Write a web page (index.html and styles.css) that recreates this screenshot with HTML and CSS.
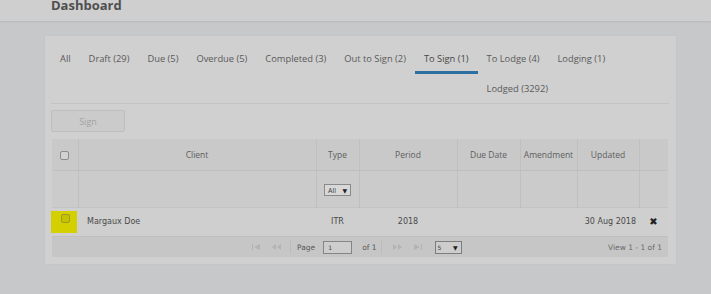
FILE: index.html
```html
<!DOCTYPE html>
<html>
<head>
<meta charset="utf-8">
<link rel="stylesheet" href="styles.css">
</head>
<body>
<header class="topbar"><h1 class="title">Dashboard</h1></header>
<main class="main">
  <section class="panel">
    <nav class="tabs">
      <a class="tab">All</a>
      <a class="tab">Draft (29)</a>
      <a class="tab">Due (5)</a>
      <a class="tab">Overdue (5)</a>
      <a class="tab">Completed (3)</a>
      <a class="tab">Out to Sign (2)</a>
      <a class="tab active">To Sign (1)</a>
      <a class="tab">To Lodge (4)</a>
      <a class="tab">Lodging (1)</a>
      <a class="tab">Lodged (3292)</a>
    </nav>
    <div class="toolbar"><button class="btn">Sign</button></div>
    <div class="grid">
      <table class="tbl">
        <colgroup>
          <col class="c-chk"><col class="c-client"><col class="c-type"><col class="c-period"><col class="c-due"><col class="c-amend"><col class="c-upd"><col class="c-act">
        </colgroup>
        <thead>
          <tr class="hrow">
            <th><span class="cb"></span></th>
            <th>Client</th>
            <th>Type</th>
            <th>Period</th>
            <th>Due Date</th>
            <th>Amendment</th>
            <th>Updated</th>
            <th></th>
          </tr>
          <tr class="frow">
            <th></th><th></th>
            <th><span class="sel">All<span class="arrow">▼</span></span></th>
            <th></th><th></th><th></th><th></th><th></th>
          </tr>
        </thead>
        <tbody>
          <tr class="drow">
            <td class="chkcell"><span class="hl"><span class="cb cb-y"></span></span></td>
            <td class="left">Margaux Doe</td>
            <td>ITR</td>
            <td>2018</td>
            <td></td>
            <td></td>
            <td class="right">30 Aug 2018</td>
            <td class="x">✖</td>
          </tr>
        </tbody>
      </table>
      <div class="pager">
        <div class="pg-center">
          <span class="pa"><svg width="8" height="6" viewBox="0 0 8 6"><rect x="0" y="0" width="1" height="6"/><path d="M8 0 L2 3 L8 6 Z"/></svg></span>
          <span class="pa"><svg width="9" height="6" viewBox="0 0 9 6"><path d="M4 0 L0 3 L4 6 Z M9 0 L5 3 L9 6 Z"/></svg></span>
          <span class="sep"></span>
          <span class="pt">Page</span><span class="pin">1</span><span class="pt">of 1</span>
          <span class="sep"></span>
          <span class="pa"><svg width="9" height="6" viewBox="0 0 9 6"><path d="M0 0 L4 3 L0 6 Z M5 0 L9 3 L5 6 Z"/></svg></span>
          <span class="pa"><svg width="8" height="6" viewBox="0 0 8 6"><path d="M0 0 L6 3 L0 6 Z"/><rect x="7" y="0" width="1" height="6"/></svg></span>
          <span class="psel">5<span class="arrow">▼</span></span>
        </div>
        <div class="pg-right">View 1 - 1 of 1</div>
      </div>
    </div>
  </section>
</main>
</body>
</html>
```
FILE: styles.css
```css
html, body { margin: 0; padding: 0; }
body {
  background: #c7c8ca;
  font-family: "Open Sans", "DejaVu Sans", sans-serif;
  width: 711px;
  height: 294px;
  overflow: hidden;
}
.topbar {
  height: 21px;
  background: #cfcfcf;
  box-shadow: 0 1px 2px rgba(0,0,0,0.08);
  overflow: hidden;
  padding-left: 51px;
}
.title {
  margin: -4px 0 0 0;
  font-size: 13px;
  font-weight: 700;
  color: #4f4f4f;
  line-height: 18px;
}
.main { padding: 15px 0 0 45px; }
.panel {
  width: 618px;
  background: #d0d0d0;
  padding: 8px 7px 7px 6px;
  box-shadow: 0 0 1px rgba(0,0,0,0.08);
}
.tabs {
  height: 59px;
  overflow: hidden;
  border-bottom: 1px solid #c3c3c3;
}
.tab {
  float: left;
  display: block;
  padding: 0 9px;
  height: 30px;
  line-height: 30px;
  font-size: 9.33px;
  color: #5a5a5a;
}
.tab.active {
  color: #474747;
  height: 27px;
  border-bottom: 3px solid #2c6e9f;
  margin-bottom: 2px;
}
.toolbar { padding: 6px 0 7px 0; }
.btn {
  display: block;
  width: 74px;
  height: 22px;
  margin: 0;
  padding: 0;
  background: #cbcbcb;
  border: 1px solid #bebebe;
  border-radius: 2px;
  color: #a3a3a3;
  font-family: "Open Sans", sans-serif;
  font-size: 9px;
}
.grid { margin-left: 1px; width: 616px; }
.tbl {
  width: 616px;
  border-collapse: collapse;
  table-layout: fixed;
}
.c-chk { width: 26px; }
.c-client { width: 238px; }
.c-type { width: 43px; }
.c-period { width: 98px; }
.c-due { width: 63px; }
.c-amend { width: 57px; }
.c-upd { width: 62px; }
.c-act { width: 29px; }
.tbl th {
  border: 1px solid #bfbfbf;
  border-top: none;
  font-weight: 400;
  font-size: 8.5px;
  color: #5e5e5e;
  padding: 0;
  text-align: center;
}
.tbl th:first-child { border-left: none; }
.tbl th:last-child { border-right: none; }
.hrow { height: 31px; background: #c9c9c9; }
.frow { height: 37px; background: #cbcbcb; }
.frow th { border-bottom: none; }
.cb {
  display: inline-block;
  width: 7px;
  height: 7px;
  border: 1px solid #8d8d8d;
  border-radius: 2px;
  background: #d2d2d2;
  vertical-align: middle;
}
.sel {
  display: inline-block;
  width: 27px;
  height: 12px;
  line-height: 12px;
  border: 1px solid #8a8a8a;
  background: #d8d8d8;
  font-size: 7px;
  color: #3c3c3c;
  text-align: left;
  padding-left: 3px;
  box-sizing: border-box;
  margin-top: 3px;
}
.arrow { float: right; font-size: 6px; margin-right: 3px; color: #222; }
.drow { height: 29px; background: #cfcfcf; }
.drow td {
  font-family: "DejaVu Sans", Verdana, sans-serif;
  font-size: 8px;
  color: #4a4a4a;
  text-align: center;
  padding: 0;
  border-top: 1px solid #c4c4c4;
}
.drow td.left { text-align: left; padding-left: 9px; }
.drow td.right { text-align: right; padding-right: 3px; }
.drow td.x { font-size: 10px; color: #222; }
.hl {
  display: block;
  width: 26px;
  height: 22px;
  margin-left: -1px;
  background: #d3cf00;
  line-height: 20px;
  text-align: center;
}
.cb-y { background: #c6c200; border-color: #9c9a2c; margin-left: 3px; margin-top: -4px; }
.pager {
  height: 20px;
  background: #c6c6c6;
  border-top: 1px solid #c0c0c0;
  display: flex;
  align-items: center;
  font-family: "DejaVu Sans", Verdana, sans-serif;
  font-size: 7.5px;
  color: #595959;
}
.pg-center {
  display: flex;
  align-items: center;
  margin-left: 194px;
}
.pa { width: 20px; display: flex; justify-content: center; }
.pa svg { fill: #b3b3b3; display: block; }
.sep { width: 1px; height: 14px; background: #bcbcbc; margin: 0 6px 0 4px; }
.pt { font-size: 7.5px; }
.pin {
  display: inline-block;
  width: 29px;
  height: 13px;
  border: 1px solid #858585;
  background: #cdcdcd;
  box-sizing: border-box;
  font-size: 6px;
  line-height: 11px;
  padding-left: 4px;
  margin: 0 10px 0 8px;
  color: #444;
}
.psel {
  display: inline-block;
  width: 27px;
  height: 13px;
  border: 1px solid #7c7c7c;
  background: #cdcdcd;
  box-sizing: border-box;
  font-size: 6px;
  line-height: 11px;
  padding-left: 2px;
  margin-left: 7px;
  color: #444;
}
.pg-right { margin-left: auto; padding-right: 6px; color: #6a6a6a; }
```
